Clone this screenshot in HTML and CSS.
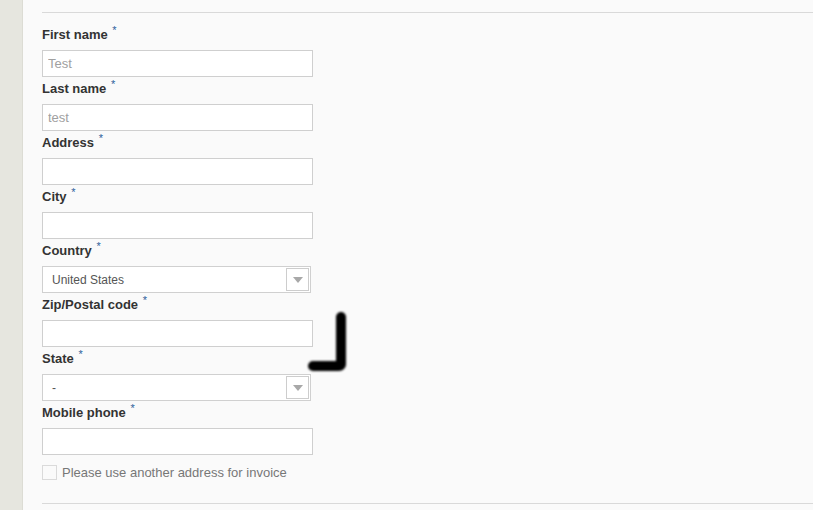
FILE: index.html
```html
<!DOCTYPE html>
<html>
<head>
<meta charset="utf-8">
<link rel="stylesheet" href="styles.css">
</head>
<body>
<div class="page">
  <div class="side"></div>
  <div class="main">
    <div class="rule"></div>
    <form class="form">
      <label class="label">First name <span class="req">*</span></label>
      <input class="field" type="text" placeholder="Test">
      <label class="label">Last name <span class="req">*</span></label>
      <input class="field" type="text" placeholder="test">
      <label class="label">Address <span class="req">*</span></label>
      <input class="field" type="text">
      <label class="label">City <span class="req">*</span></label>
      <input class="field" type="text">
      <label class="label">Country <span class="req">*</span></label>
      <div class="select"><span class="select-text">United States</span><span class="arrow"><span class="tri"></span></span></div>
      <label class="label">Zip/Postal code <span class="req">*</span></label>
      <input class="field" type="text">
      <label class="label">State <span class="req">*</span></label>
      <div class="select"><span class="select-text">-</span><span class="arrow"><span class="tri"></span></span></div>
      <label class="label">Mobile phone <span class="req">*</span></label>
      <input class="field" type="text">
      <div class="check-row"><span class="check"></span><span class="check-text">Please use another address for invoice</span></div>
    </form>
    <div class="rule bottom"></div>
  </div>
  <svg class="mark" width="60" height="80" viewBox="0 0 60 80">
    <defs><filter id="b" x="-50%" y="-50%" width="200%" height="200%"><feGaussianBlur stdDeviation="1.2"/></filter></defs>
    <path d="M41 13 L41 60 Q41 62 38 62 L13 62" fill="none" stroke="#000" stroke-width="10" stroke-linecap="round" stroke-linejoin="round" filter="url(#b)"/>
  </svg>
</div>
</body>
</html>
```
FILE: styles.css
```css
html, body {
  margin: 0;
  padding: 0;
  background: #fafafa;
  font-family: "Liberation Sans", Arial, sans-serif;
}
.page {
  position: relative;
  display: flex;
  width: 813px;
  height: 510px;
  overflow: hidden;
}
.side {
  width: 22px;
  flex: none;
  background: #e6e6df;
  border-right: 1px solid #dcdcd4;
}
.main {
  flex: 1;
  padding: 12px 0 0 19px;
}
.rule {
  height: 1px;
  background: #d9d9d9;
}
.rule.bottom {
  margin-top: 23px;
}
.form {
  display: flex;
  flex-direction: column;
  align-items: flex-start;
  padding-top: 10px;
}
.label {
  display: block;
  height: 16px;
  line-height: 14px;
  font-size: 13px;
  font-weight: bold;
  color: #333;
  margin-bottom: 11px;
}
.req {
  font-size: 11px;
  font-weight: normal;
  color: #2d5f9a;
  vertical-align: 5px;
  margin-left: 1px;
}
.field {
  box-sizing: border-box;
  width: 271px;
  height: 27px;
  margin: 0;
  padding: 0 5px;
  border: 1px solid #cfcfcf;
  background: #fff;
  font-family: "Liberation Sans", Arial, sans-serif;
  font-size: 13px;
  color: #555;
  outline: none;
}
.field::placeholder {
  color: #a0a0a0;
}
.select {
  box-sizing: border-box;
  width: 269px;
  height: 27px;
  border: 1px solid #d0d0d0;
  background: #fff;
  display: flex;
  align-items: center;
  justify-content: space-between;
  padding: 0 1px 0 9px;
}
.select-text {
  font-size: 12px;
  color: #555;
}
.arrow {
  box-sizing: border-box;
  width: 23px;
  height: 23px;
  border: 1px solid #cdcdcd;
  background: #fff;
  display: flex;
  align-items: center;
  justify-content: center;
}
.tri {
  width: 0;
  height: 0;
  border-left: 5px solid transparent;
  border-right: 5px solid transparent;
  border-top: 6px solid #a8a8a8;
}
.check-row {
  display: flex;
  align-items: center;
  margin-top: 9px;
  height: 16px;
}
.check {
  box-sizing: border-box;
  width: 15px;
  height: 15px;
  border: 1px solid #dadada;
  background: #fafafa;
  margin-right: 5px;
}
.check-text {
  font-size: 13px;
  color: #777;
}
.mark {
  position: absolute;
  left: 300px;
  top: 304px;
}
```
